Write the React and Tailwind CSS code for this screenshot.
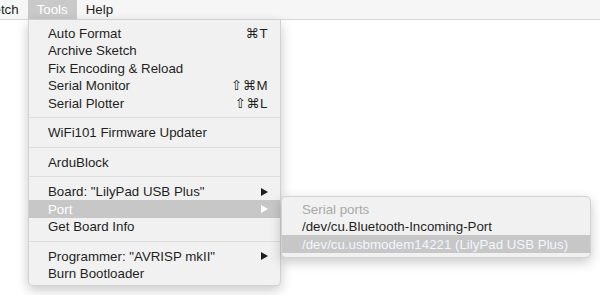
import React from "react";

const font = { fontFamily: '"Liberation Sans", "DejaVu Sans", Arial, sans-serif' };

const Arrow = ({ white }) => (
  <svg width="7" height="8" viewBox="0 0 7 8" className="shrink-0">
    <path d="M0 0 L7 4 L0 8 Z" fill={white ? "#ffffff" : "#1e1e1e"} />
  </svg>
);

const Item = ({ label, shortcut, arrow, active }) => (
  <div
    className={
      "flex items-center justify-between h-[17.5px] pt-[1px] pl-[19px] pr-[12px] " +
      (active ? "bg-[#c7c7c7] text-white" : "text-[#1f1f1f]")
    }
  >
    <span>{label}</span>
    {shortcut && <span className="tracking-[0.5px]">{shortcut}</span>}
    {arrow && <Arrow white={active} />}
  </div>
);

const Sep = () => (
  <div className="h-[12px] flex items-center">
    <div className="h-px w-full bg-[#dcdcdc]" />
  </div>
);

const SubItem = ({ label, muted, active }) => (
  <div
    className={
      "flex items-center h-[17.5px] pt-[1px] pl-[20px] " +
      (active ? "bg-[#c7c7c7] text-[#f2f6ff]" : muted ? "text-[#a9a9a9]" : "text-[#1f1f1f]")
    }
  >
    {label}
  </div>
);

export default function App() {
  return (
    <div className="relative w-[600px] h-[295px] overflow-hidden bg-white text-[13.3px] leading-none" style={font}>
      <div className="flex h-[20px] bg-[#f6f6f6] border-b border-[#d9d9d9] text-[#1f1f1f]">
        <div className="flex items-center -ml-[31px] px-[9px]">Sketch</div>
        <div className="flex items-center px-[9px] bg-[#c9c9c9] text-white">Tools</div>
        <div className="flex items-center px-[9px]">Help</div>
      </div>

      <div className="absolute left-[28px] top-[20px] w-[253px] pt-[4px] pb-[3px] bg-[#f1f1f1] border-x border-b border-[#d2d2d2] rounded-b-[5px] shadow-[0_4px_12px_rgba(0,0,0,0.22)]">
        <Item label="Auto Format" shortcut="⌘T" />
        <Item label="Archive Sketch" />
        <Item label="Fix Encoding & Reload" />
        <Item label="Serial Monitor" shortcut="⇧⌘M" />
        <Item label="Serial Plotter" shortcut="⇧⌘L" />
        <Sep />
        <Item label="WiFi101 Firmware Updater" />
        <Sep />
        <Item label="ArduBlock" />
        <Sep />
        <Item label='Board: "LilyPad USB Plus"' arrow />
        <Item label="Port" arrow active />
        <Item label="Get Board Info" />
        <Sep />
        <Item label='Programmer: "AVRISP mkII"' arrow />
        <Item label="Burn Bootloader" />
      </div>

      <div className="absolute left-[281px] top-[196px] w-[310px] pt-[3px] pb-[4px] bg-[#f1f1f1] border border-[#d2d2d2] rounded-[5px] shadow-[0_4px_12px_rgba(0,0,0,0.22)]">
        <SubItem label="Serial ports" muted />
        <SubItem label="/dev/cu.Bluetooth-Incoming-Port" />
        <SubItem label="/dev/cu.usbmodem14221 (LilyPad USB Plus)" active />
      </div>
    </div>
  );
}
